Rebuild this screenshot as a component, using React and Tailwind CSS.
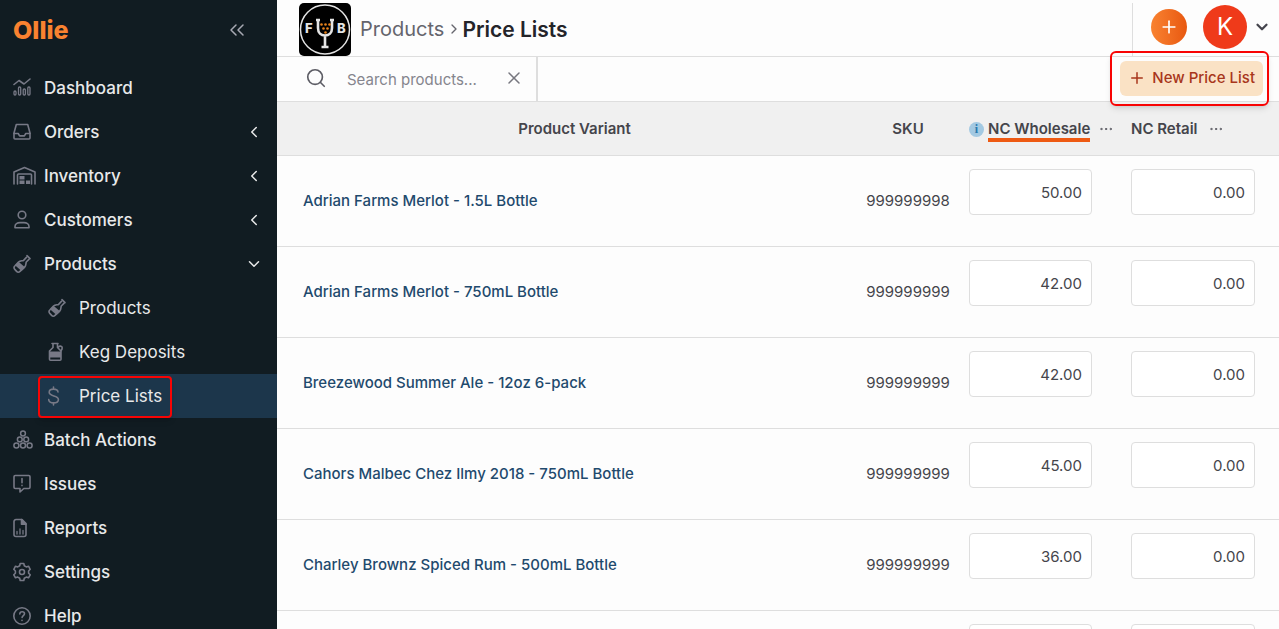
import React, { useState } from 'react';
import { ChevronDown, ChevronLeft, ChevronRight, ChevronsLeft, Ellipsis, Plus, Search, X } from 'lucide-react';
import clsx from 'clsx';

const Icon = ({ width = 18, children }) => (
  <svg
    width={width}
    height="20"
    viewBox={`0 0 ${width} 20`}
    fill="none"
    stroke="currentColor"
    strokeWidth="1.6"
    strokeLinecap="round"
    strokeLinejoin="round"
    aria-hidden="true"
  >
    {children}
  </svg>
);

const DashboardIcon = () => (
  <Icon>
    <path d="M1 6.5 6 2.5l5 3.5L17 1" />
    <g strokeWidth="1.3">
      <rect x="1" y="13" width="2" height="4" rx="1" />
      <rect x="5.5" y="9" width="2.2" height="8" rx="1" />
      <rect x="10.2" y="11" width="2.2" height="6" rx="1" />
      <rect x="14.8" y="9" width="2.2" height="8" rx="1" />
    </g>
  </Icon>
);

const OrdersIcon = () => (
  <Icon>
    <path d="M1 11 3.3 2.5h11.4L17 11v5a1 1 0 0 1-1 1H2a1 1 0 0 1-1-1z" />
    <path d="M1 11.5h4.2l1.4 2.4h4.8l1.4-2.4H17" />
  </Icon>
);

const InventoryIcon = () => (
  <Icon width={23}>
    <path d="M1 18V6L11.5 1.5 22 6v12M4.5 18V9a1 1 0 0 1 1-1h12a1 1 0 0 1 1 1v9" />
    <path d="M6.5 10h5v3.5h-5zM6.5 14.5h5V18h-5zM13 14.5h4V18h-4z" fill="currentColor" stroke="none" />
  </Icon>
);

const CustomersIcon = () => (
  <Icon>
    <circle cx="9" cy="5" r="3.8" />
    <path d="M2 17.8v-1.2c0-2.4 2.4-4 5-4h4c2.6 0 5 1.6 5 4v1.2z" />
  </Icon>
);

const BottleIcon = () => (
  <Icon>
    <path d="m14 1.6 3 3M13.4 3.4l-2.8 3C9.3 7 7 6.6 5.5 8L1.8 12c-1.2 1.2-1 2.2 0 3.4l1.8 2c1 1.1 2.3 1.1 3.4 0l4.8-4.6c1.5-1.5.9-3.7 1.5-4.8l2.6-2.6" />
    <path d="M5.5 7.7 12.3 13.5 8.5 17 2 11.2z" fill="currentColor" stroke="none" />
  </Icon>
);

const KegIcon = () => (
  <Icon width={16}>
    <path d="M4 1.5h6M5 1.8v3.7L1.5 9v8.3a1 1 0 0 0 1 1h9.5a1 1 0 0 0 1-1V9L9.5 5.5V1.8" />
    <path d="M1.5 9.5H13v6H1.5z" fill="currentColor" stroke="none" />
    <path d="M10.5 5.2c.2-1.5 3.7-1.500 3.700.5 0 1.400-.4 2.200-1.200 3" />
  </Icon>
);

const DollarIcon = () => (
  <Icon width={12}>
    <path d="M5.5 1v2.200M5.500 16.800V19M10 6c-.2-2-1.900-2.900-4.500-2.900C3 3.100 1.200 4.200 1.200 6.300c0 4.700 9.200 2.500 9.200 7.200 0 2.200-2 3.400-4.900 3.400-2.900 0-4.600-1.200-4.800-3.300" />
  </Icon>
);

const BatchIcon = () => (
  <Icon width={20}>
    <g strokeWidth="1.5">
      <circle cx="10" cy="3.5" r="2.4" />
      <circle cx="6.8" cy="9.4" r="2.4" />
      <circle cx="13.2" cy="9.4" r="2.4" />
      <circle cx="3.4" cy="15.4" r="2.5" />
      <circle cx="10" cy="15.4" r="2.5" />
      <circle cx="16.6" cy="15.4" r="2.5" />
    </g>
  </Icon>
);

const IssuesIcon = () => (
  <Icon>
    <path d="M2.2 1.5h13.6c.7 0 1.2.5 1.2 1.2v10.6c0 .7-.5 1.2-1.2 1.2h-5L7 18v-3.500H2.200c-.7 0-1.200-.5-1.200-1.200V2.700c0-.7.5-1.200 1.200-1.200zM9 4.500v4.300M9 11.400v.2" />
  </Icon>
);

const ReportsIcon = () => (
  <Icon width={14}>
    <path d="M3 1.5h6l4 4v11a2 2 0 0 1-2 2H3a2 2 0 0 1-2-2v-13a2 2 0 0 1 2-2z" />
    <path d="M8.5 1.5v4.8H13z" fill="currentColor" />
    <path d="M4 16v-2.5M7 16v-5M10 16v-3.5" strokeWidth="1.3" />
  </Icon>
);

const SettingsIcon = () => (
  <Icon>
    <circle cx="9" cy="10" r="2.5" />
    <path d="m7.200 1.500-.5 2.200-2 1.200-2.200-.7L.8 7.300 2.400 9v2.200L.8 12.800l1.700 3 2.200-.7 2 1.200.5 2.200h3.600l.5-2.200 2-1.200 2.200.7 1.700-3-1.600-1.600V9l1.600-1.700-1.700-3.100-2.200.7-2-1.200-.5-2.200z" />
  </Icon>
);

const HelpIcon = () => (
  <Icon>
    <circle cx="9" cy="10" r="8.2" />
    <path d="M6.8 8c.1-3 4.7-2.800 4.700-.2 0 1.700-2.400 1.900-2.400 3.700M9 14.200v.2" />
  </Icon>
);

const navItems = [
  { label: 'Dashboard', icon: DashboardIcon },
  { label: 'Orders', icon: OrdersIcon, chevron: 'left' },
  { label: 'Inventory', icon: InventoryIcon, chevron: 'left' },
  { label: 'Customers', icon: CustomersIcon, chevron: 'left' },
  { label: 'Products', icon: BottleIcon, chevron: 'down' },
  { label: 'Products', icon: BottleIcon, sub: true },
  { label: 'Keg Deposits', icon: KegIcon, sub: true },
  { label: 'Price Lists', icon: DollarIcon, sub: true, active: true },
  { label: 'Batch Actions', icon: BatchIcon },
  { label: 'Issues', icon: IssuesIcon },
  { label: 'Reports', icon: ReportsIcon },
  { label: 'Settings', icon: SettingsIcon },
  { label: 'Help', icon: HelpIcon },
];

const products = [
  { name: 'Adrian Farms Merlot - 1.5L Bottle', sku: '999999998', wholesale: '50.00', retail: '0.00' },
  { name: 'Adrian Farms Merlot - 750mL Bottle', sku: '999999999', wholesale: '42.00', retail: '0.00' },
  { name: 'Breezewood Summer Ale - 12oz 6-pack', sku: '999999999', wholesale: '42.00', retail: '0.00' },
  { name: 'Cahors Malbec Chez Ilmy 2018 - 750mL Bottle', sku: '999999999', wholesale: '45.00', retail: '0.00' },
  { name: 'Charley Brownz Spiced Rum - 500mL Bottle', sku: '999999999', wholesale: '36.00', retail: '0.00' },
  { name: '', sku: '', wholesale: '', retail: '' },
];

const NavItem = ({ item }) => {
  const ItemIcon = item.icon;
  return (
    <li className="relative">
      <a
        href="#"
        className={clsx(
          'flex h-11 items-center pr-3.5 text-[17px] text-[#e8e9ea]',
          item.sub ? 'pl-12' : 'pl-[13px] font-medium',
          item.active && 'bg-[#1c364b]'
        )}
      >
        <span className="w-[31px] shrink-0 text-[#777986]">
          <ItemIcon />
        </span>
        <span className="grow pt-0.5">{item.label}</span>
        {item.chevron === 'left' && <ChevronLeft size={18} strokeWidth={2} />}
        {item.chevron === 'down' && <ChevronDown size={18} strokeWidth={2} />}
      </a>
      {item.active && (
        <span className="pointer-events-none absolute inset-y-0 left-[38px] mt-0.5 w-[134px] rounded border-2 border-[#f80404] shadow-md" />
      )}
    </li>
  );
};

const Sidebar = () => (
  <aside className="w-[277px] shrink-0 bg-[#111c22]">
    <div className="flex h-[66px] items-start justify-between pt-[14px] pr-7 pl-[13px]">
      <a href="#" className="text-[25px] leading-8 font-extrabold text-[#f98230]">
        Ollie
      </a>
      <button type="button" aria-label="Collapse menu" className="mt-1 text-[#a7a9b3]">
        <ChevronsLeft size={24} strokeWidth={1.5} />
      </button>
    </div>
    <nav>
      <ul>
        {navItems.map((item, index) => (
          <NavItem key={index} item={item} />
        ))}
      </ul>
    </nav>
  </aside>
);

const CompanyLogo = () => (
  <svg width="52" height="53" viewBox="0 0 52 53" className="shrink-0" aria-hidden="true">
    <rect width="52" height="53" rx="5" fill="#000" />
    <circle cx="26" cy="26.5" r="24.5" fill="none" stroke="#e4e4e4" strokeWidth="1.5" />
    <g fill="#e4e4e4" fontFamily="Inter, sans-serif" fontWeight="800" fontSize="13">
      <text x="6" y="30">F</text>
      <text x="38" y="30">B</text>
    </g>
    <path
      d="M17 17h4M31 17h4M19 17v8c0 5 3 7.5 7 7.5s7-2.500 7-7.500v-8M26 33v10.500M22.500 44h7"
      fill="none"
      stroke="#e4e4e4"
      strokeWidth="2.6"
    />
    <g fill="#e8821c">
      <circle cx="22.5" cy="21.5" r="1.3" />
      <circle cx="26.5" cy="21.5" r="1.3" />
      <circle cx="30.5" cy="21.5" r="1.3" />
      <circle cx="24.5" cy="25.5" r="1.3" />
      <circle cx="28.5" cy="25.5" r="1.3" />
      <circle cx="26.5" cy="29.5" r="1.3" />
    </g>
  </svg>
);

const Header = () => (
  <header className="flex h-[57px] items-center justify-between border-b border-[#dedede] pl-[22px]">
    <div className="flex items-center pt-[3px]">
      <CompanyLogo />
      <nav className="ml-[9px] flex items-center text-xl">
        <a href="#" className="text-[#65656d]">Products</a>
        <ChevronRight size={16} strokeWidth={2} className="ml-0.5 text-[#65656d]" />
        <h1 className="text-[21px] font-semibold text-[#242429]">Price Lists</h1>
      </nav>
    </div>
    <div className="mt-[3px] flex h-[53px] items-center border-l border-[#dedede] pr-2 pb-1.5 pl-[18px]">
      <button
        type="button"
        aria-label="Add"
        className="flex size-9 items-center justify-center rounded-full bg-linear-to-r from-[#f98230] to-[#e8580f] text-white"
      >
        <Plus size={20} strokeWidth={2} />
      </button>
      <button type="button" aria-label="Account" className="ml-4 flex items-center text-[#45454d]">
        <span className="flex size-11 items-center justify-center rounded-full bg-[#ef3a1a] text-2xl text-white">K</span>
        <ChevronDown size={18} strokeWidth={3} className="ml-1.5" />
      </button>
    </div>
  </header>
);

const Toolbar = () => {
  const [query, setQuery] = useState('');

  return (
    <div className="flex h-[45px] items-center justify-between border-b border-[#dedede] pr-4">
      <div className="flex h-full w-[261px] items-center border-r-2 border-[#dedede] pr-3 pl-7">
        <Search size={22} strokeWidth={1.8} className="mb-0.5 shrink-0 text-[#5c5c64]" />
        <input
          type="text"
          aria-label="Search products"
          placeholder="Search products..."
          value={query}
          onChange={(e) => setQuery(e.target.value)}
          className="ml-5 w-0 grow pt-0.5 text-[15px] outline-none placeholder:text-[#85858d]"
        />
        <button type="button" aria-label="Clear search" onClick={() => setQuery('')} className="mb-0.5 text-[#77777f]">
          <X size={20} strokeWidth={1.8} />
        </button>
      </div>
      <div className="relative mb-0.5">
        <button
          type="button"
          className="flex h-[35px] items-center gap-1.5 rounded-md bg-[#fae2c5] px-2 text-[15px] font-medium text-[#a8361b]"
        >
          <Plus size={18} strokeWidth={2} />
          New Price List
        </button>
        <span className="pointer-events-none absolute -inset-y-2.5 -right-1.5 -left-2.5 rounded-md border-2 border-[#f80404] shadow-md" />
      </div>
    </div>
  );
};

const PriceInput = ({ label, value }) => (
  <input
    type="text"
    aria-label={label}
    defaultValue={value}
    className="h-[46px] w-full rounded border border-[#dedede] bg-white px-[9px] pt-0.5 text-right"
  />
);

const MoreButton = ({ label }) => (
  <button type="button" aria-label={label} className="text-[#55555d]">
    <Ellipsis size={16} strokeWidth={1.5} />
  </button>
);

const PriceTable = () => (
  <table className="w-full table-fixed text-[15px] text-[#45454b]">
    <colgroup>
      <col />
      <col className="w-[104px]" />
      <col className="w-[162px]" />
      <col className="w-[157px]" />
    </colgroup>
    <thead>
      <tr className="h-[53px] border-b border-[#dedede] bg-[#f0f0f0]">
        <th className="pt-0.5 pr-2.5 pl-[26px] font-semibold">Product Variant</th>
        <th className="pt-0.5 font-semibold">SKU</th>
        <th className="pt-0.5 pl-[9px] font-semibold">
          <div className="flex items-center">
            <span className="mr-1 flex size-[15px] items-center justify-center rounded-full bg-[#a3c9e2] font-['Liberation_Serif',serif] text-xs font-bold text-[#2878ad]">
              i
            </span>
            <span className="-mb-1 border-b-4 border-[#ee5a13] leading-[18px]">NC Wholesale</span>
            <span className="ml-2 flex">
              <MoreButton label="NC Wholesale options" />
            </span>
          </div>
        </th>
        <th className="pt-0.5 pl-[9px] font-semibold">
          <div className="flex items-center gap-2.5">
            NC Retail
            <MoreButton label="NC Retail options" />
          </div>
        </th>
      </tr>
    </thead>
    <tbody>
      {products.map((product, index) => (
        <tr key={index} className="h-[91px] border-b border-[#dedede]">
          <td className="pt-0.5 pl-[26px]">
            <a href="#" className="font-medium text-[#1f4a6d]">{product.name}</a>
          </td>
          <td className="pt-0.5 text-center">{product.sku}</td>
          <td className="pt-[13px] pr-[30px] pl-[9px] align-top">
            <PriceInput label={`${product.name} NC Wholesale`} value={product.wholesale} />
          </td>
          <td className="pt-[13px] pr-6 pl-[9px] align-top">
            <PriceInput label={`${product.name} NC Retail`} value={product.retail} />
          </td>
        </tr>
      ))}
    </tbody>
  </table>
);

const App = () => (
  <div className="flex h-screen overflow-hidden bg-[#fdfdfd] font-['Inter',sans-serif]">
    <Sidebar />
    <main className="min-w-0 grow">
      <Header />
      <Toolbar />
      <PriceTable />
    </main>
  </div>
);

export default App;
